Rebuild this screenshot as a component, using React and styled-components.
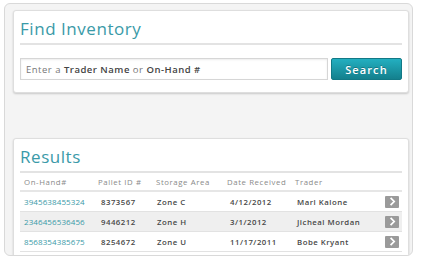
import React from "react";
import styled, { createGlobalStyle } from "styled-components";

const GlobalStyle = createGlobalStyle`
  body {
    margin: 0;
    background: #ffffff;
    font-family: "Open Sans", "DejaVu Sans", sans-serif;
  }
`;

const rows = [
  { onHand: "3945638455324", pallet: "8373567", area: "Zone C", date: "4/12/2012", trader: "Marl Kalone" },
  { onHand: "2346456536456", pallet: "9446212", area: "Zone H", date: "3/1/2012", trader: "Jicheal Mordan" },
  { onHand: "8568354385675", pallet: "8254672", area: "Zone U", date: "11/17/2011", trader: "Bobe Kryant" },
];

function App() {
  return (
    <Page>
      <GlobalStyle />
      <Frame>
        <Card>
          <Title>Find Inventory</Title>
          <Divider />
          <SearchRow>
            <SearchBox>
              Enter a <b>Trader Name</b> or <b>On-Hand #</b>
            </SearchBox>
            <SearchButton>Search</SearchButton>
          </SearchRow>
        </Card>
        <Spacer />
        <Card>
          <Title>Results</Title>
          <Divider />
          <Table>
            <HeadRow>
              <span>On-Hand#</span>
              <span>Pallet ID #</span>
              <span>Storage Area</span>
              <span>Date Received</span>
              <span>Trader</span>
            </HeadRow>
            {rows.map((r, i) => (
              <Row key={r.onHand} $shade={i % 2 === 1}>
                <Link>{r.onHand}</Link>
                <span>{r.pallet}</span>
                <span>{r.area}</span>
                <span>{r.date}</span>
                <span>{r.trader}</span>
                <Arrow>
                  <svg width="7" height="9" viewBox="0 0 7 9">
                    <path d="M1.6 0.8 L5.2 4.5 L1.6 8.2" fill="none" stroke="#fff" strokeWidth="1.7" />
                  </svg>
                </Arrow>
              </Row>
            ))}
          </Table>
        </Card>
      </Frame>
    </Page>
  );
}

const Page = styled.div`
  padding: 3px 9px 6px 4px;
  width: 422px;
  height: 262px;
  box-sizing: border-box;
`;

const Frame = styled.div`
  height: 253px;
  box-sizing: border-box;
  background: #f4f4f4;
  border: 1px solid #d9d9d9;
  border-radius: 6px;
  padding: 6px 3px 0 8px;
  overflow: hidden;
  display: flex;
  flex-direction: column;
`;

const Card = styled.div`
  flex: none;
  background: #fff;
  border: 1px solid #dedede;
  border-radius: 3px;
  box-shadow: 0 1px 2px rgba(0, 0, 0, 0.18);
  padding: 8px 6px 12px 6px;
`;

const Spacer = styled.div`
  height: 45px;
  flex: none;
`;

const Title = styled.h2`
  margin: 0;
  font-weight: 400;
  font-size: 17px;
  line-height: 20px;
  letter-spacing: 0.55px;
  color: #3a9aa8;
`;

const Divider = styled.div`
  height: 2px;
  background: #e3e3e3;
  margin-top: 4px;
`;

const SearchRow = styled.div`
  display: flex;
  gap: 3px;
  margin-top: 13px;
  height: 22px;
`;

const SearchBox = styled.div`
  flex: 1;
  box-sizing: border-box;
  border: 1px solid #d6d6d6;
  box-shadow: inset 0 1px 2px rgba(0, 0, 0, 0.08);
  padding: 0 5px;
  display: flex;
  align-items: center;
  font-size: 9.5px;
  letter-spacing: 0.5px;
  color: #777;
  white-space: pre;
  b {
    font-weight: 600;
    color: #444;
  }
`;

const SearchButton = styled.button`
  width: 71px;
  box-sizing: border-box;
  border: 1px solid #127986;
  border-radius: 2px;
  background: linear-gradient(#23afc0, #14808d);
  color: #fff;
  font-family: "Open Sans", "DejaVu Sans", sans-serif;
  font-weight: 600;
  font-size: 11px;
  letter-spacing: 1.1px;
  padding: 0;
  text-shadow: 0 -1px 0 rgba(0, 0, 0, 0.25);
`;

const Table = styled.div`
  display: flex;
  flex-direction: column;
`;

const HeadRow = styled.div`
  display: grid;
  grid-template-columns: 74px 58px 71px 68px 1fr;
  padding-left: 4px;
  height: 17px;
  align-items: center;
  border-bottom: 2px solid #e6e6e6;
  font-size: 7.8px;
  letter-spacing: 0.6px;
  color: #8a8a8a;
`;

const Row = styled.div`
  display: grid;
  grid-template-columns: 77px 56px 73px 67px 1fr 14px;
  padding: 0 3px 0 4px;
  height: 20px;
  box-sizing: border-box;
  align-items: center;
  border-bottom: 1px solid #e2e2e2;
  background: ${(p) => (p.$shade ? "#efefef" : "#fff")};
  font-size: 7.8px;
  font-weight: 600;
  letter-spacing: 0.5px;
  color: #474747;
`;

const Link = styled.span`
  color: #3a9aa8;
  font-weight: 400;
  font-size: 8px;
  letter-spacing: 0.1px;
`;

const Arrow = styled.span`
  width: 14px;
  height: 12px;
  background: #9a9a9a;
  border-radius: 1px;
  display: flex;
  align-items: center;
  justify-content: center;
`;

export default App;
